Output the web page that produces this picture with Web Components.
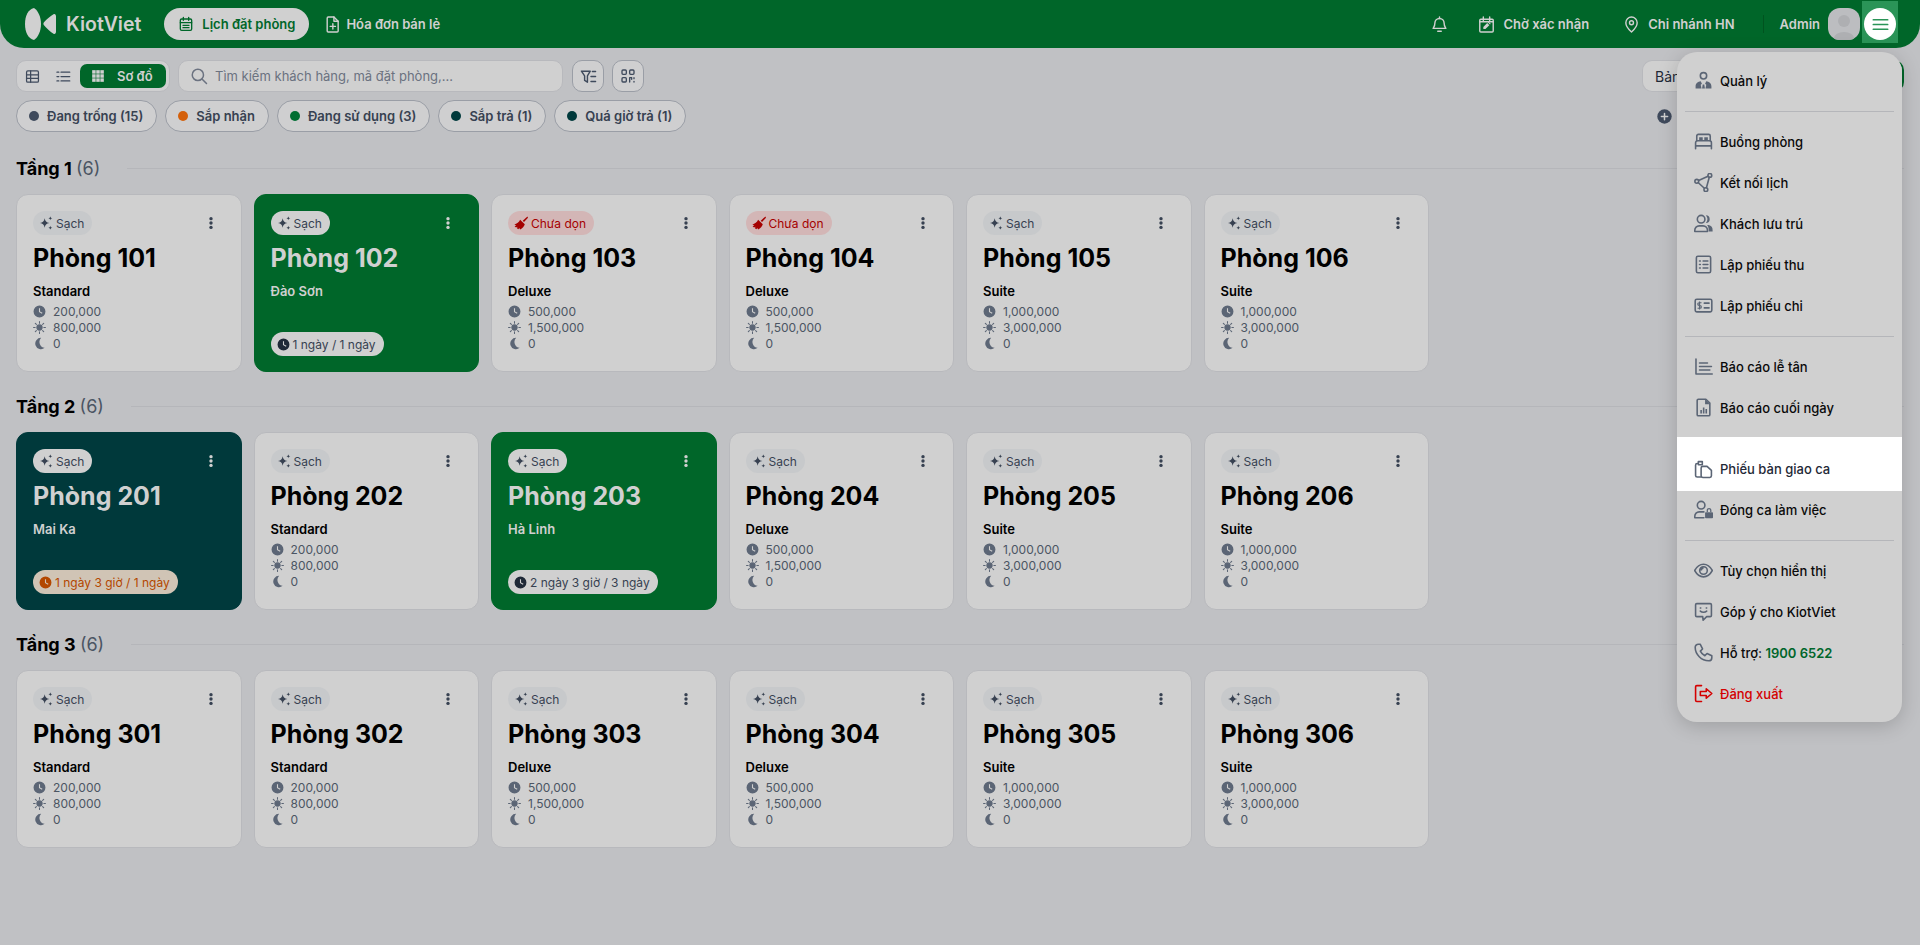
<!DOCTYPE html>
<html lang="vi">
<head>
<meta charset="utf-8">
<title>Lịch đặt phòng</title>
<style>
  html, body { margin: 0; height: 945px; overflow: hidden; }
  body { background: #c0c1c4; font-family: Inter, "Noto Sans", sans-serif; color: #000; }
</style>
</head>
<body>
<app-header></app-header>
<main-area>
  <tool-bar></tool-bar>
  <floor-section name="Tầng 1" count="6">
    <room-card name="Phòng 101" kind="Standard" a="200,000" b="800,000"></room-card>
    <room-card name="Phòng 102" guest="Đào Sơn" stay="1 ngày / 1 ngày" tone="green"></room-card>
    <room-card name="Phòng 103" kind="Deluxe" a="500,000" b="1,500,000" dirty></room-card>
    <room-card name="Phòng 104" kind="Deluxe" a="500,000" b="1,500,000" dirty></room-card>
    <room-card name="Phòng 105" kind="Suite" a="1,000,000" b="3,000,000"></room-card>
    <room-card name="Phòng 106" kind="Suite" a="1,000,000" b="3,000,000"></room-card>
  </floor-section>
  <floor-section name="Tầng 2" count="6">
    <room-card name="Phòng 201" guest="Mai Ka" stay="1 ngày 3 giờ / 1 ngày" tone="teal" late></room-card>
    <room-card name="Phòng 202" kind="Standard" a="200,000" b="800,000"></room-card>
    <room-card name="Phòng 203" guest="Hà Linh" stay="2 ngày 3 giờ / 3 ngày" tone="green"></room-card>
    <room-card name="Phòng 204" kind="Deluxe" a="500,000" b="1,500,000"></room-card>
    <room-card name="Phòng 205" kind="Suite" a="1,000,000" b="3,000,000"></room-card>
    <room-card name="Phòng 206" kind="Suite" a="1,000,000" b="3,000,000"></room-card>
  </floor-section>
  <floor-section name="Tầng 3" count="6">
    <room-card name="Phòng 301" kind="Standard" a="200,000" b="800,000"></room-card>
    <room-card name="Phòng 302" kind="Standard" a="200,000" b="800,000"></room-card>
    <room-card name="Phòng 303" kind="Deluxe" a="500,000" b="1,500,000"></room-card>
    <room-card name="Phòng 304" kind="Deluxe" a="500,000" b="1,500,000"></room-card>
    <room-card name="Phòng 305" kind="Suite" a="1,000,000" b="3,000,000"></room-card>
    <room-card name="Phòng 306" kind="Suite" a="1,000,000" b="3,000,000"></room-card>
  </floor-section>
</main-area>
<side-menu>
  <menu-item icon="manager">Quản lý</menu-item>
  <menu-rule></menu-rule>
  <menu-item icon="bed">Buồng phòng</menu-item>
  <menu-item icon="share">Kết nối lịch</menu-item>
  <menu-item icon="guests">Khách lưu trú</menu-item>
  <menu-item icon="receipt">Lập phiếu thu</menu-item>
  <menu-item icon="bill">Lập phiếu chi</menu-item>
  <menu-rule></menu-rule>
  <menu-item icon="chart">Báo cáo lễ tân</menu-item>
  <menu-item icon="filechart">Báo cáo cuối ngày</menu-item>
  <menu-item icon="copy" highlight>Phiếu bàn giao ca</menu-item>
  <menu-item icon="userlock">Đóng ca làm việc</menu-item>
  <menu-rule></menu-rule>
  <menu-item icon="eye">Tùy chọn hiển thị</menu-item>
  <menu-item icon="smile">Góp ý cho KiotViet</menu-item>
  <menu-item icon="phone">Hỗ trợ: <b style="color:#00662b;font-weight:600">1900 6522</b></menu-item>
  <menu-item icon="logout" danger>Đăng xuất</menu-item>
</side-menu>

<script>
const line = 'fill="none" stroke="currentColor" stroke-width="2" stroke-linecap="round" stroke-linejoin="round"'
const solid = 'fill="currentColor"'

const ICONS = {
  calendar: `<g ${line} stroke-width="2.200"><rect x="3.500" y="4.500" width="17" height="17" rx="2"/><path d="M8 2v4.500M16 2v4.500M3.500 10h17"/><path d="M7.500 14h9M7.500 17.500h9"/></g>`,
  fileplus: `<g ${line} stroke-width="2.200"><path d="M6 1.500h8l6 6V21a1.500 1.500 0 0 1-1.500 1.500H6A1.500 1.500 0 0 1 4.500 21V3A1.500 1.500 0 0 1 6 1.500z"/><path d="M14 1.500v6h6M12.500 11v7.500M8.800 14.700h7.400"/></g>`,
  bell: `<g ${line} stroke-width="2.200"><path d="M5.500 10a6.500 6.500 0 0 1 13 0c0 5 2 6.500 2.500 7.500H3c.5-1 2.500-2.500 2.500-7.500z"/><path d="M9.500 21.500h5M12 1.500v2"/></g>`,
  calpen: `<g ${line} stroke-width="2.200"><rect x="2.500" y="4.500" width="19" height="18" rx="1.500"/><path d="M7.500 1.500v5M16.500 1.500v5M2.500 8h19"/></g><path ${solid} d="M7.500 18.500v-3l5.500-5.500 3 3-5.500 5.500zM14 9l1-1 3 3-1 1z"/>`,
  pin: `<g ${line} stroke-width="2.200"><path d="M12 22.500s-8-7-8-13a8 8 0 0 1 16 0c0 6-8 13-8 13z"/><circle cx="12" cy="9.500" r="2.800"/></g>`,
  table: `<g ${line} stroke-width="2.400"><rect x="2.500" y="3" width="19" height="18" rx="2"/><path d="M2.500 9.200h19M2.500 15h19M9 3v18"/></g>`,
  list: `<g ${line} stroke-width="3.600" stroke-linecap="butt"><path d="M8 5h14M8 12h14M8 19h14M1.500 5h3M1.500 12h3M1.500 19h3"/></g>`,
  grid: `<g ${solid}><rect x="2" y="2" width="6" height="6"/><rect x="9" y="2" width="6" height="6"/><rect x="16" y="2" width="6" height="6"/><rect x="2" y="9" width="6" height="6"/><rect x="9" y="9" width="6" height="6"/><rect x="16" y="9" width="6" height="6"/><rect x="2" y="16" width="6" height="6"/><rect x="9" y="16" width="6" height="6"/><rect x="16" y="16" width="6" height="6"/></g>`,
  search: `<g ${line}><circle cx="10.500" cy="10.500" r="7.500"/><path d="M16 16l6 6"/></g>`,
  filter: `<g ${line} stroke-width="2.400"><path d="M2 4.500h12.500L10.500 11v9l-4-2.500V11z"/><path d="M17.500 5H22M15.500 12H22M15.500 19H22"/></g>`,
  qr: `<g ${line} stroke-width="2.800"><rect x="3" y="3" width="6.500" height="6.500" rx="1.500"/><rect x="14.500" y="3" width="6.500" height="6.500" rx="1.500"/><rect x="3" y="14.500" width="6.500" height="6.500" rx="1.500"/><path d="M14.500 21v-6.500h3V17M21 14.500v1.500M21 20v1"/></g>`,
  sparkle: `<g ${solid}><path d="M10 5c.8 4.500 2.500 6.200 7 7-4.500.8-6.200 2.500-7 7-.8-4.500-2.500-6.200-7-7 4.500-.8 6.200-2.500 7-7z"/><path d="M18.500 2c.3 1.900 1 2.600 3 3-2 .4-2.700 1.100-3 3-.3-1.900-1-2.600-3-3 2-.4 2.700-1.100 3-3zM18.500 16c.3 1.900 1 2.600 3 3-2 .4-2.700 1.100-3 3-.3-1.900-1-2.600-3-3 2-.4 2.700-1.100 3-3z"/></g>`,
  broom: `<g ${solid}><path d="M23 1l-8 7 2.200 2.200L24 3z"/><path d="M10.500 6.500l8 7.500c-1 3.500-4 7-8 9l-1.500-2.500-1.500 2-2.500-1.500 1-2.500-2.500 1L1 17.500l3-1.500-3.500-1.500C5 13.500 8.500 10.500 10.500 6.500z"/></g>`,
  kebab: `<g ${solid}><circle cx="12" cy="4.500" r="2.900"/><circle cx="12" cy="12" r="2.900"/><circle cx="12" cy="19.500" r="2.900"/></g>`,
  clock: `<path ${solid} fill-rule="evenodd" d="M12 1a11 11 0 1 1 0 22 11 11 0 0 1 0-22zm-1 5v7l5.500 3 1-1.800-4.500-2.400V6z"/>`,
  sun: `<g ${line}><circle cx="12" cy="12" r="4.800" fill="currentColor"/><path d="M12 1v3M12 20v3M1 12h3M20 12h3M4.200 4.200l2.100 2.100M17.700 17.700l2.100 2.100M4.200 19.800l2.100-2.100M17.700 6.300l2.100-2.100" stroke-width="1.900"/></g>`,
  moon: `<path ${solid} d="M15 1.500a10.500 10.500 0 1 0 6.500 18.500A11 11 0 0 1 15 1.500z"/>`,
  plus: `<circle ${solid} cx="12" cy="12" r="11.500"/><path d="M12 7v10M7 12h10" stroke="#d0d0d0" stroke-width="2.400" stroke-linecap="round"/>`,
  burger: `<path d="M3 6h18M3 12h18M3 18h18" fill="none" stroke="#2a9457" stroke-width="2.200" stroke-linecap="round"/>`,
  manager: `<g ${line}><circle cx="12" cy="6" r="4"/></g><path ${solid} d="M2 22v-2.500C2 15.500 5 13.500 8.500 13l1.500 3-1.500 1.500 1 4.500zM22 22v-2.500c0-4-3-6-6.500-6.500L14 16l1.500 1.500-1 4.500zM11 17h2l.8 5h-3.600z"/>`,
  bed: `<g ${line}><path d="M2 21v-7.500a2.500 2.500 0 0 1 2.500-2.500h15a2.500 2.500 0 0 1 2.500 2.500V21M2 17.500h20"/><path d="M3.500 11V5a2 2 0 0 1 2-2h13a2 2 0 0 1 2 2v6"/></g><path ${solid} d="M6.500 6.500h4.500V11H6.500zM13 6.500h4.500V11H13z"/>`,
  share: `<g ${line} stroke-width="1.800"><circle cx="3.500" cy="10.500" r="2.400"/><circle cx="20" cy="3" r="2.400"/><circle cx="15" cy="21" r="2.400"/><path d="M5.800 9.500L17.700 4M5.500 12.300l7.600 7M19.300 5.300l-3.600 13.400"/></g>`,
  guests: `<g ${line} stroke-width="1.800"><circle cx="9" cy="6.500" r="4.800"/><path d="M1 22v-1.500A5.500 5.500 0 0 1 6.500 15h5a5.500 5.500 0 0 1 5.500 5.500V22z"/></g><path ${solid} d="M15 1.700a4.800 4.800 0 1 1 0 9.600 7.500 7.500 0 0 0 0-9.600zM18.500 14a6.500 6.500 0 0 1 5 6.500V22h-5v-2c0-2.500-.5-4.300-2-6z"/>`,
  receipt: `<g ${line} stroke-width="1.800"><rect x="3" y="1.500" width="18" height="21" rx="2"/><path d="M11.500 7.500h6M11.500 12h6M11.500 16.500h6M7 7.500h1M7 12h1M7 16.500h1"/></g>`,
  bill: `<g ${line} stroke-width="1.800"><rect x="1.500" y="4" width="21" height="16" rx="2"/><path d="M13 9h6M13 15h6"/></g><path d="M9.500 8.500H6.500a1.700 1.700 0 0 0 0 3.500h1a1.700 1.700 0 0 1 0 3.500H4.500M7 7v10" fill="none" stroke="currentColor" stroke-width="1.500"/>`,
  chart: `<g ${line} stroke-width="1.800"><path d="M2.500 2.500V21.500H23M7 7.500h10M7 12h15M7 16.500h13"/></g>`,
  filechart: `<g ${line} stroke-width="1.800"><path d="M5.500 1.500H15l5 5V21a1.500 1.500 0 0 1-1.500 1.500h-13A1.500 1.500 0 0 1 4 21V3a1.500 1.500 0 0 1 1.500-1.500z"/></g><path ${solid} d="M14 1.500V8h6zM8 15h2v4.500H8zM11.200 12h2v7.500h-2zM14.500 14h2v5.500h-2z"/>`,
  copy: `<g ${line} stroke-width="1.500"><path d="M5.500 4.500H4A2 2 0 0 0 2 6.500v13a2 2 0 0 0 2 2h5"/><path d="M5.500 2h5v4h-5z"/><path d="M11 8h5.500l5.500 5v7a2 2 0 0 1-2 2h-9a2 2 0 0 1-2-2V10a2 2 0 0 1 2-2z"/></g>`,
  userlock: `<g ${line} stroke-width="1.800"><circle cx="9" cy="6.500" r="4.800"/><path d="M1 22.500v-2A5.500 5.500 0 0 1 6.500 15h6M1 22.500h11.500"/></g><path ${solid} d="M15 15.500h8a1 1 0 0 1 1 1V22a1 1 0 0 1-1 1h-8a1 1 0 0 1-1-1v-5.500a1 1 0 0 1 1-1zM16 15v-2a3 3 0 0 1 6 0v2h-1.600v-2a1.400 1.400 0 0 0-2.800 0v2z"/>`,
  eye: `<g ${line} stroke-width="1.800"><path d="M.8 12C3.500 7 7.500 4 12 4s8.500 3 11.200 8c-2.700 5-6.700 8-11.200 8S3.500 17 .8 12z"/><circle cx="12" cy="12" r="4.800"/></g><path ${solid} d="M12 7.200A4.800 4.800 0 0 0 7.200 12h3A1.800 1.800 0 0 1 12 10.200z"/>`,
  smile: `<g ${line} stroke-width="1.800"><path d="M3.500 2h17A1.500 1.500 0 0 1 22 3.500V17a1.500 1.500 0 0 1-1.500 1.500H16L11.500 23 11 18.500H3.500A1.500 1.500 0 0 1 2 17V3.500A1.500 1.500 0 0 1 3.500 2z"/><path d="M8 11.500c2 2 6 2 8 0M8 7.500h.5M15.500 7.500h.5"/></g>`,
  phone: `<path ${line} stroke-width="1.800" d="M5.500 1.500h2.300l3 6-2.800 2.800c1.200 2.500 3.200 4.500 5.700 5.700l2.800-2.800 6 3v2.300c0 2.300-1.700 4-4 4C9.500 22.500 1.500 14.500 1.500 5.500c0-2.300 1.700-4 4-4z"/>`,
  logout: `<g ${line} stroke-width="2"><path d="M9.500 2H3.500A1.500 1.500 0 0 0 2 3.500v17A1.500 1.500 0 0 0 3.500 22h6"/><path d="M15.500 6L22.500 12l-7 6v-3.500H8v-5h7.500z"/></g>`
}

const icon = (name, size) => `<svg width="${size}" height="${size}" viewBox="0 0 24 24" aria-hidden="true">${ICONS[name]}</svg>`

class MainArea extends HTMLElement {
  constructor(){
    super()
    this.attachShadow({mode: 'open'}).innerHTML = `<style>:host{ display: block; padding: 0 16px; }</style><slot></slot>`
  }
}

class AppHeader extends HTMLElement {
  constructor(){
    super()
    const root = this.attachShadow({mode: 'open'})
    root.innerHTML = `
      <style>
        :host{
          display: flex;
          align-items: center;
          height: 48px;
          padding: 0 24px;
          background: #006629;
          border-radius: 0 0 24px 24px;
          color: #d0d0d0;
          font-size: 13px;
          font-weight: 600;
        }
        svg{ display: block; flex: none; }
        .logo{ display: flex; align-items: center; gap: 10px; font-size: 19.500px; font-weight: 600; margin-right: 23px; }
        .tab{ display: flex; align-items: center; gap: 8px; height: 32px; white-space: nowrap; }
        .tab.on{ background: #d0d0d0; color: #006629; border-radius: 16px; padding: 0 14px; margin-right: 15px; }
        .tab.doc{ gap: 5px; }
        .right{ margin-left: auto; display: flex; align-items: center; }
        .sep{ width: 1px; height: 18px; background: #00531f; margin: 0 16px 0 28px; }
        .avatar{ width: 32px; height: 32px; border-radius: 12px; background: #bcbdc0; overflow: hidden; margin-left: 8px; }
        .burger{ position: relative; width: 32px; height: 32px; margin-left: 4px; }
        .burger::before{ content: ""; position: absolute; left: -2px; right: -2px; top: -7px; bottom: -3px; background: #2a9457; }
        .burger span{ position: relative; display: flex; align-items: center; justify-content: center; width: 32px; height: 32px; border-radius: 50%; background: #fff; }
      </style>
      <div class="logo">
        <svg width="32" height="32" viewBox="0 0 32 32"><path fill="#d0d0d0" d="M10 0c4.500 3 7 9.500 7 16s-2.500 13-7 16C4 30.500 1 24 1 16S4 1.500 10 0z"/><path fill="#d0d0d0" d="M29.500 6.300c1.500-.8 2.500.5 2.500 2 .3 5 .3 10.500 0 15.500 0 1.500-1 2.800-2.500 2-3.500-2.300-7-5.500-9.500-8.600-.8-1-.8-2 0-3 2.500-3 6-5.600 9.500-7.900z"/></svg>
        KiotViet
      </div>
      <div class="tab on">${icon('calendar', 16)}Lịch đặt phòng</div>
      <div class="tab doc">${icon('fileplus', 17)}Hóa đơn bán lẻ</div>
      <div class="right">
        <div class="tab" style="margin-right:30px">${icon('bell', 17)}</div>
        <div class="tab" style="margin-right:34px">${icon('calpen', 17)}Chờ xác nhận</div>
        <div class="tab">${icon('pin', 17)}Chi nhánh HN</div>
        <div class="sep"></div>
        <div>Admin</div>
        <div class="avatar"><svg width="32" height="32" viewBox="0 0 32 32"><circle cx="16" cy="13" r="6" fill="#aeafb2"/><ellipse cx="16" cy="30" rx="10" ry="6" fill="#aeafb2"/></svg></div>
        <div class="burger"><span>${icon('burger', 19)}</span></div>
      </div>
    `
  }
}

class ToolBar extends HTMLElement {
  constructor(){
    super()
    const root = this.attachShadow({mode: 'open'})
    const chips = [['Đang trống (15)', '#3f4a5c'], ['Sắp nhận', '#d4600b'], ['Đang sử dụng (3)', '#006e32'], ['Sắp trả (1)', '#00393b'], ['Quá giờ trả (1)', '#00393b']]
    root.innerHTML = `
      <style>
        :host{ display: block; padding-top: 12px; margin-bottom: 25px; color: #374151; font-size: 13px; }
        svg{ display: block; flex: none; }
        .row{ display: flex; align-items: center; gap: 8px; height: 32px; }
        .row + .row{ margin-top: 8px; }
        .switch{ display: flex; align-items: center; box-sizing: border-box; width: 154px; height: 32px; padding-left: 8px; gap: 16px; background: #cfcfd0; border: 1px solid #b8b9bd; border-radius: 10px; color: #3f4a5c; }
        .switch .on{ flex: none; margin-left: -7px; display: flex; align-items: center; gap: 12px; width: 86px; height: 24px; box-sizing: border-box; padding-left: 11px; background: #006629; color: #d0d0d0; border-radius: 7px; font-weight: 600; }
        .search{ display: flex; align-items: center; gap: 7px; box-sizing: border-box; width: 385px; margin-right: 1px; height: 32px; padding: 0 11px; background: #d0d0d0; border: 1px solid #b8b9bd; border-radius: 10px; color: #6b7280; }
        .square{ display: flex; align-items: center; justify-content: center; box-sizing: border-box; width: 32px; height: 32px; background: #cfcfd0; border: 1px solid #9a9ea6; border-radius: 10px; color: #3f4a5c; }
        .select{ display: flex; align-items: center; box-sizing: border-box; margin-left: auto; width: 262px; height: 32px; padding-left: 12px; background: #d0d0d0; border: 1px solid #b8b9bd; border-radius: 10px; border-right: 2px solid #006629; color: #1f2937; font-size: 14px; }
        .chip{ display: flex; align-items: center; gap: 8px; box-sizing: border-box; height: 32px; padding: 0 13px 0 12px; background: #cfcfd0; border: 1px solid #9a9ea6; border-radius: 16px; font-weight: 600; white-space: nowrap; }
        .dot{ width: 10px; height: 10px; border-radius: 50%; }
        .add{ margin-left: auto; width: 247px; color: #3f4a5c; }
      </style>
      <div class="row">
        <div class="switch">
          ${icon('table', 15)}${icon('list', 15)}
          <div class="on">${icon('grid', 14)}Sơ đồ</div>
        </div>
        <div class="search">${icon('search', 18)}Tìm kiếm khách hàng, mã đặt phòng,...</div>
        <div class="square">${icon('filter', 17)}</div>
        <div class="square">${icon('qr', 16)}</div>
        <div class="select">Bản đồ</div>
      </div>
      <div class="row">
        ${chips.map(c => `<div class="chip"><span class="dot" style="background:${c[1]}"></span>${c[0]}</div>`).join('')}
        <div class="add">${icon('plus', 15)}</div>
      </div>
    `
  }
}

class FloorSection extends HTMLElement {
  constructor(){
    super()
    this.attachShadow({mode: 'open'})
  }
  connectedCallback(){
    this.shadowRoot.innerHTML = `
      <style>
        :host{ display: block; margin-bottom: 23px; }
        .head{ display: flex; align-items: center; gap: 27px; height: 22px; margin-bottom: 15px; font-size: 18px; font-weight: 700; color: #000; white-space: nowrap; }
        .head span{ font-weight: 400; color: #4b5563; }
        .head i{ flex: 1; height: 1px; background: #b5b6ba; }
        .grid{ display: grid; grid-template-columns: repeat(8, 1fr); gap: 12px; }
      </style>
      <div class="head"><div>${this.getAttribute('name')} <span>(${this.getAttribute('count')})</span></div><i></i></div>
      <div class="grid"><slot></slot></div>
    `
  }
}

class RoomCard extends HTMLElement {
  constructor(){
    super()
    this.attachShadow({mode: 'open'})
  }
  connectedCallback(){
    const get = k => this.getAttribute(k)
    const status = this.hasAttribute('dirty')
      ? `<span class="chip dirty">${icon('broom', 14)}Chưa dọn</span>`
      : `<span class="chip">${icon('sparkle', 16)}Sạch</span>`
    const body = get('tone')
      ? `<div class="kind">${get('guest')}</div>
         <div class="stay ${this.hasAttribute('late') ? 'late' : ''}">${icon('clock', 13)}${get('stay')}</div>`
      : `<div class="kind">${get('kind')}</div>
         <div class="rates">
           <div>${icon('clock', 13)}${get('a')}</div>
           <div>${icon('sun', 13)}${get('b')}</div>
           <div>${icon('moon', 13)}0</div>
         </div>`
    this.shadowRoot.innerHTML = `
      <style>
        :host{
          display: flex;
          flex-direction: column;
          box-sizing: border-box;
          height: 178px;
          padding: 16px 16px 15px;
          background: #d0d0d0;
          border: 1px solid #b8b9bd;
          border-radius: 12px;
          color: #000;
          font-size: 12px;
        }
        :host([tone="green"]){ background: #006629; border-color: #006629; color: #d0d0d0; }
        :host([tone="teal"]){ background: #00393b; border-color: #00393b; color: #d0d0d0; }
        svg{ display: block; flex: none; }
        .top{ display: flex; align-items: center; justify-content: space-between; height: 24px; }
        .chip{ display: inline-flex; align-items: center; gap: 2px; height: 24px; padding: 0 8px 0 5px; border-radius: 12px; background: #c7c9cb; color: #374151; }
        :host([tone]) .chip{ background: #d0d0d0; }
        .chip.dirty{ gap: 3px; padding-left: 6px; background: #d3b6b6; color: #a50000; }
        .more{ color: #374151; margin-right: 7px; }
        :host([tone]) .more{ color: #d0d0d0; }
        h3{ margin: 7px 0 0; font-size: 25px; line-height: 32px; font-weight: 700; }
        .kind{ margin-top: 9px; line-height: 16px; font-size: 13px; font-weight: 600; }
        .rates{ margin-top: 4px; color: #4b5563; }
        .rates div{ display: flex; align-items: center; gap: 7px; height: 16px; }
        .rates svg{ color: #5b6575; }
        .stay{ margin-top: auto; align-self: flex-start; display: flex; align-items: center; gap: 3px; height: 24px; padding: 0 8px 0 6px; border-radius: 12px; background: #d0d0d0; color: #374151; }
        .stay svg{ color: #1f2937; }
        .stay.late{ background: #d0c4b5; color: #b34700; }
        .stay.late svg{ color: #b34700; }
      </style>
      <div class="top">${status}<span class="more">${icon('kebab', 14)}</span></div>
      <h3>${get('name')}</h3>
      ${body}
    `
  }
}

class SideMenu extends HTMLElement {
  constructor(){
    super()
    const root = this.attachShadow({mode: 'open'})
    root.innerHTML = `
      <style>
        :host{
          position: absolute;
          top: 52px;
          left: 1677px;
          width: 225px;
          box-sizing: border-box;
          height: 670px;
          padding: 8px 0;
          background: #d0d0d0;
          border-radius: 20px;
          box-shadow: 0 4px 20px rgba(0,0,0,.18);
        }
      </style>
      <slot></slot>
    `
  }
}

class MenuRule extends HTMLElement {
  constructor(){
    super()
    this.attachShadow({mode: 'open'}).innerHTML = `
      <style>:host{ display: block; height: 1px; margin: 9.500px 8px; background: #b5b6ba; }</style>
    `
  }
}

class MenuItem extends HTMLElement {
  constructor(){
    super()
    this.attachShadow({mode: 'open'})
  }
  connectedCallback(){
    this.shadowRoot.innerHTML = `
      <style>
        :host{
          display: flex;
          align-items: center;
          position: relative;
          box-sizing: border-box;
          height: 41px;
          padding-left: 43px;
          font-size: 13px;
          font-weight: 500;
          color: #0a0a0a;
        }
        :host([highlight]){ height: 54px; padding-top: 10px; margin: 9px 0 -2px; background: #fff; color: #1f2937; }
        :host([danger]){ color: #d40000; }
        .ic{ position: absolute; left: 16px; width: 20px; display: flex; justify-content: center; color: #5b6575; }
        :host([highlight]) .ic{ top: 23px; }
        :host([danger]) .ic{ color: #d40000; }
        svg{ display: block; }
        .label{ white-space: pre-wrap; }
      </style>
      <span class="ic">${icon(this.getAttribute('icon'), 19)}</span><span class="label"><slot></slot></span>
    `
  }
}

customElements.define('main-area', MainArea)
customElements.define('app-header', AppHeader)
customElements.define('tool-bar', ToolBar)
customElements.define('floor-section', FloorSection)
customElements.define('room-card', RoomCard)
customElements.define('side-menu', SideMenu)
customElements.define('menu-rule', MenuRule)
customElements.define('menu-item', MenuItem)
</script>
</body>
</html>
